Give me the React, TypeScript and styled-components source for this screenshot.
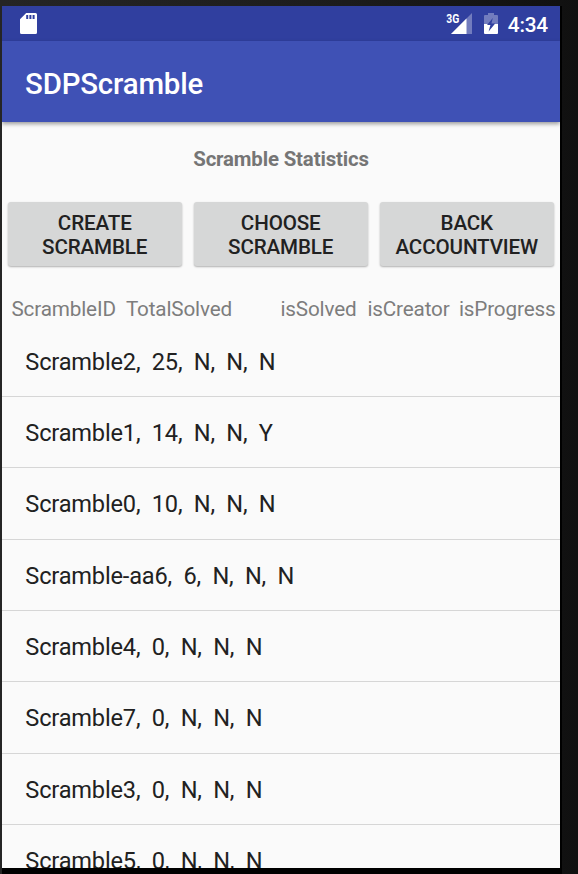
import React from "react";
import styled, { createGlobalStyle } from "styled-components";

const GlobalStyle = createGlobalStyle`
  * { box-sizing: border-box; }
  body { margin: 0; background: #141414; font-family: Roboto, sans-serif; }
`;

const Desktop = styled.div`
  width: 578px;
  height: 874px;
  padding: 6px 0 0 2px;
  overflow: hidden;
  background: linear-gradient(90deg, #252525 0%, #1c1c1c 60%, #101010 100%);
`;

const Device = styled.div`
  width: 560px;
  height: 868px;
  padding: 0 2px 6px 0;
  background: #000;
`;

const Screen = styled.main`
  display: flex;
  flex-direction: column;
  width: 558px;
  height: 862px;
  overflow: hidden;
  background: #fafafa;
`;

const StatusBar = styled.div`
  display: flex;
  flex: none;
  align-items: center;
  height: 35px;
  padding: 0 12px 0 18px;
  background: #303f9f;
  color: #fff;
`;

const StatusIcons = styled.div`
  display: flex;
  align-items: center;
  margin-left: auto;
`;

const BatterySlot = styled.span`
  display: flex;
  margin: 0 9.5px 0 12px;
`;

const Clock = styled.span`
  padding-top: 3px;
  font-size: 20.8px;
  font-weight: 500;
  letter-spacing: -0.2px;
  line-height: 32px;
`;

const AppBar = styled.header`
  display: flex;
  flex: none;
  align-items: center;
  height: 81px;
  padding: 4px 23px 0;
  background: #3f51b5;
  box-shadow: 0 2px 4px rgba(0, 0, 0, 0.38);
`;

const AppTitle = styled.h1`
  margin: 0;
  color: #fff;
  font-size: 29.4px;
  font-weight: 500;
  letter-spacing: -0.17px;
`;

const SectionTitle = styled.h2`
  flex: none;
  margin: 25px 0 0;
  height: 25px;
  color: #757575;
  font-size: 20.4px;
  font-weight: 700;
  letter-spacing: -0.15px;
  line-height: 25px;
  text-align: center;
`;

const Actions = styled.div`
  display: grid;
  flex: none;
  grid-template-columns: repeat(3, 174.5px);
  gap: 11.5px;
  margin: 30px 0 0 5.5px;
`;

const ActionButton = styled.button`
  height: 64px;
  padding: 2px 0 0;
  border: 0;
  border-radius: 3px;
  background: #d6d7d7;
  box-shadow: 0 1px 2px rgba(0, 0, 0, 0.3);
  color: #212121;
  font: 500 20.6px/24px Roboto, sans-serif;
  letter-spacing: -0.13px;
  text-transform: uppercase;
`;

const Columns = styled.div`
  display: flex;
  flex: none;
  height: 59.5px;
  padding: 30.6px 0 0 9.4px;
  color: #7d7d7d;
  font-size: 20.7px;
  letter-spacing: -0.15px;
  line-height: 25px;
  white-space: nowrap;
`;

const Column = styled.span<{ $width: number }>`
  flex: none;
  width: ${({ $width }) => $width}px;
`;

const List = styled.ul`
  flex: none;
  margin: 0;
  padding: 0;
  list-style: none;
`;

const Row = styled.li`
  height: 71.35px;
  padding: 1px 23px 0 23.3px;
  border-bottom: 1.5px solid #d6d6d6;
  color: #212121;
  font-size: 23.6px;
  letter-spacing: -0.17px;
  line-height: 71px;
  white-space: pre;
`;

const columns = [
  { label: "ScrambleID", width: 114.5 },
  { label: "TotalSolved", width: 154.5 },
  { label: "isSolved", width: 87 },
  { label: "isCreator", width: 91.5 },
  { label: "isProgress", width: 100 },
];

const scrambles = [
  ["Scramble2", 25, "N", "N", "N"],
  ["Scramble1", 14, "N", "N", "Y"],
  ["Scramble0", 10, "N", "N", "N"],
  ["Scramble-aa6", 6, "N", "N", "N"],
  ["Scramble4", 0, "N", "N", "N"],
  ["Scramble7", 0, "N", "N", "N"],
  ["Scramble3", 0, "N", "N", "N"],
  ["Scramble5", 0, "N", "N", "N"],
];

const SdCardIcon = () => (
  <svg width="17" height="21" viewBox="0 0 17 21">
    <path
      fill="#fff"
      fillRule="evenodd"
      d="M6.2 0H15.5a1.5 1.5 0 0 1 1.5 1.5v18a1.5 1.5 0 0 1-1.5 1.5H1.5a1.5 1.5 0 0 1-1.5-1.5V6.2ZM6.2 2v4h2V2Zm3.2 0v4h2V2Zm3.2 0v4h2V2Z"
    />
  </svg>
);

const SignalIcon = () => (
  <svg width="26" height="21" viewBox="0 0 26 21">
    <path fill="#fff" fillOpacity="0.32" d="M26 0v21H5Z" />
    <path fill="#303f9f" d="M0 0h14v10.5H0Z" />
    <path fill="#fff" d="M20.5 5.5v15.5H5Z" />
    <text x="0.3" y="9.5" fill="#fff" fontFamily="Roboto, sans-serif" fontSize="12" fontWeight="700" textLength="13" lengthAdjust="spacingAndGlyphs">
      3G
    </text>
  </svg>
);

const BatteryIcon = () => (
  <svg width="14" height="21" viewBox="0 0 14 21">
    <path fill="#fff" fillOpacity="0.32" d="M4 0h6v2h3a1 1 0 0 1 1 1v8H0V3a1 1 0 0 1 1-1h3Z" />
    <path fill="#fff" d="M0 11h14v9a1 1 0 0 1-1 1H1a1 1 0 0 1-1-1Z" />
    <path fill="#303f9f" d="M8.8 5 3 12h3.4l-1.8 6.5L11.2 10.5H7.4Z" />
  </svg>
);

export default function App() {
  return (
    <Desktop>
      <GlobalStyle />
      <Device>
        <Screen>
          <StatusBar>
            <SdCardIcon />
            <StatusIcons>
              <SignalIcon />
              <BatterySlot><BatteryIcon /></BatterySlot>
              <Clock>4:34</Clock>
            </StatusIcons>
          </StatusBar>
          <AppBar>
            <AppTitle>SDPScramble</AppTitle>
          </AppBar>
          <SectionTitle>Scramble Statistics</SectionTitle>
          <Actions>
            <ActionButton>Create<br />Scramble</ActionButton>
            <ActionButton>Choose<br />Scramble</ActionButton>
            <ActionButton>Back<br />AccountView</ActionButton>
          </Actions>
          <Columns>
            {columns.map(({ label, width }) => (
              <Column key={label} $width={width}>{label}</Column>
            ))}
          </Columns>
          <List>
            {scrambles.map((row) => (
              <Row key={row[0]}>{row.join(",  ")}</Row>
            ))}
          </List>
        </Screen>
      </Device>
    </Desktop>
  );
}
